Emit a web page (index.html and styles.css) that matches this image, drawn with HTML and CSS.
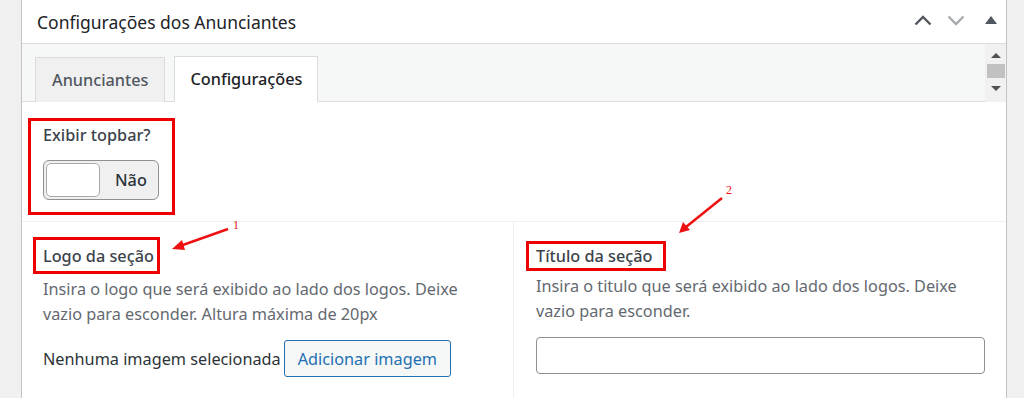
FILE: index.html
```html
<!DOCTYPE html>
<html lang="pt-BR">
<head>
    <meta charset="UTF-8">
    <title>Configurações dos Anunciantes</title>
    <link rel="stylesheet" href="styles.css">
</head>
<body>
    <div class="painel">
        <div class="cabecalho">
            <h2>Configurações dos Anunciantes</h2>
            <div class="acoes">
                <svg class="seta" width="18" height="11" viewBox="0 0 18 11"><path d="M1.5 9.5 L9 2 L16.5 9.5" fill="none" stroke="#50575e" stroke-width="2.4"/></svg>
                <svg class="seta" width="18" height="11" viewBox="0 0 18 11"><path d="M1.5 1.5 L9 9 L16.5 1.5" fill="none" stroke="#a7aaad" stroke-width="2.4"/></svg>
                <svg class="triangulo" width="12" height="8" viewBox="0 0 12 8"><path d="M6 0 L12 8 L0 8 Z" fill="#50575e"/></svg>
            </div>
        </div>

        <div class="abas-area">
            <div class="abas">
                <div class="aba">Anunciantes</div>
                <div class="aba ativa">Configurações</div>
            </div>
            <div class="rolagem">
                <svg width="10" height="5" viewBox="0 0 10 5"><path d="M5 0 L10 5 L0 5 Z" fill="#505050"/></svg>
                <span class="rolagem-barra"></span>
                <svg width="10" height="5" viewBox="0 0 10 5"><path d="M0 0 L10 0 L5 5 Z" fill="#505050"/></svg>
            </div>
        </div>

        <div class="secao-topbar">
            <div class="destaque caixa-topbar">
                <div class="rotulo">Exibir topbar?</div>
                <div class="chave">
                    <span class="chave-botao"></span>
                    <span class="chave-texto">Não</span>
                </div>
            </div>
        </div>

        <div class="colunas">
            <div class="campo">
                <div class="destaque rotulo rotulo-logo">Logo da seção</div>
                <p class="descricao">Insira o logo que será exibido ao lado dos logos. Deixe<br>vazio para esconder. Altura máxima de 20px</p>
                <div class="imagem-linha">
                    <span>Nenhuma imagem selecionada</span>
                    <button class="botao">Adicionar imagem</button>
                </div>
            </div>
            <div class="campo campo-direita">
                <div class="destaque rotulo rotulo-titulo">Título da seção</div>
                <p class="descricao">Insira o titulo que será exibido ao lado dos logos. Deixe<br>vazio para esconder.</p>
                <input class="entrada" type="text">
            </div>
        </div>

        <svg class="anotacoes" width="986" height="398" viewBox="22 0 986 398">
            <line x1="228" y1="229" x2="180" y2="246" stroke="#ee1111" stroke-width="2.5"/>
            <path d="M172 249 L182 240 L185 250 Z" fill="#ee1111"/>
            <text x="233" y="229" class="numero">1</text>
            <line x1="722" y1="198" x2="686" y2="227" stroke="#ee1111" stroke-width="2.5"/>
            <path d="M679 233 L683 222 L690 230 Z" fill="#ee1111"/>
            <text x="726" y="194" class="numero">2</text>
        </svg>
    </div>
</body>
</html>
```

FILE: styles.css
```css
html, body { margin: 0; height: 398px; overflow: hidden; }
body { background: #f0f0f1; padding: 0 17px 0 21px; font-family: "Noto Sans", "Open Sans", sans-serif; color: #1d2327; }
.painel { position: relative; background: #fff; border-left: 1px solid #c3c4c7; border-right: 1px solid #c3c4c7; height: 398px; overflow: hidden; }

.cabecalho { height: 43px; border-bottom: 1px solid #dcdcde; display: flex; align-items: center; justify-content: space-between; }
.cabecalho h2 { margin: 0 0 0 15px; font-size: 17.5px; font-weight: 400; color: #1d2327; }
.acoes { display: flex; align-items: center; padding-right: 9px; margin-top: -3px; }
.acoes .seta { margin-right: 15px; }
.acoes .triangulo { margin-left: 5px; }

.abas-area { display: flex; background: #f6f7f7; height: 58px; }
.abas { flex: 1; display: flex; align-items: flex-end; gap: 9px; padding-left: 13px; border-bottom: 1px solid #dcdcde; }
.aba { height: 45px; box-sizing: border-box; padding: 0 15px 0 16px; display: flex; align-items: center; border: 1px solid #dcdcde; border-bottom: none; background: #f0f0f1; color: #50575e; font-size: 16.25px; font-weight: 500; margin-bottom: -1px; }
.aba.ativa { background: #fff; color: #1d2327; height: 46px; border-bottom: 1px solid #fff; }
.rolagem { width: 21px; background: #f1f1f1; display: flex; flex-direction: column; align-items: center; padding-top: 9px; box-sizing: border-box; }
.rolagem-barra { width: 18px; height: 14px; background: #c1c1c1; margin: 6px 0 8px 1px; }

.secao-topbar { border-bottom: 1px solid #f0f0f1; padding: 16px 0 6px 6px; }
.destaque { border: 3px solid #ee0000; }
.caixa-topbar { box-sizing: border-box; width: 147px; height: 97px; padding: 2px 0 0 12px; }
.rotulo { font-size: 16.25px; font-weight: 500; color: #3c434a; line-height: 24px; }
.chave { margin-top: 13px; width: 116px; height: 40px; box-sizing: border-box; border: 1px solid #8c8f94; border-radius: 6px; background: #f0f0f1; display: flex; align-items: center; padding-left: 2px; }
.chave-botao { width: 54px; height: 34px; box-sizing: border-box; background: #fff; border: 1px solid #a7aaad; border-radius: 5px; }
.chave-texto { margin-left: 15px; font-size: 16.25px; font-weight: 500; color: #2c3338; }

.colunas { display: flex; height: 200px; }
.campo { flex: 0 0 492px; border-right: 1px solid #f0f0f1; padding: 15px 21px 0 21px; box-sizing: border-box; }
.campo-direita { flex: 1; border-right: none; padding: 19px 21px 0 22px; }
.rotulo-logo { display: inline-block; margin-left: -10px; padding: 4px 3px 3px 7px; }
.rotulo-titulo { display: inline-block; margin-left: -10px; padding: 0 10px 0 7px; }
.descricao { margin: 3px 0 0; font-size: 16.25px; line-height: 25px; color: #646970; }
.imagem-linha { margin-top: 13px; display: flex; align-items: center; gap: 3px; font-size: 16.25px; color: #2c3338; }
.botao { height: 37px; padding: 0 13px; border: 1px solid #2271b1; border-radius: 3px; background: #f6f7f7; color: #2271b1; font-family: inherit; font-size: 16.25px; }
.entrada { display: block; margin-top: 13px; width: 100%; height: 37px; box-sizing: border-box; border: 1px solid #8c8f94; border-radius: 4px; background: #fff; }

.anotacoes { position: absolute; left: 0; top: 0; pointer-events: none; }
.numero { font-family: "Liberation Serif", serif; font-size: 12px; fill: #ee1111; }
```
